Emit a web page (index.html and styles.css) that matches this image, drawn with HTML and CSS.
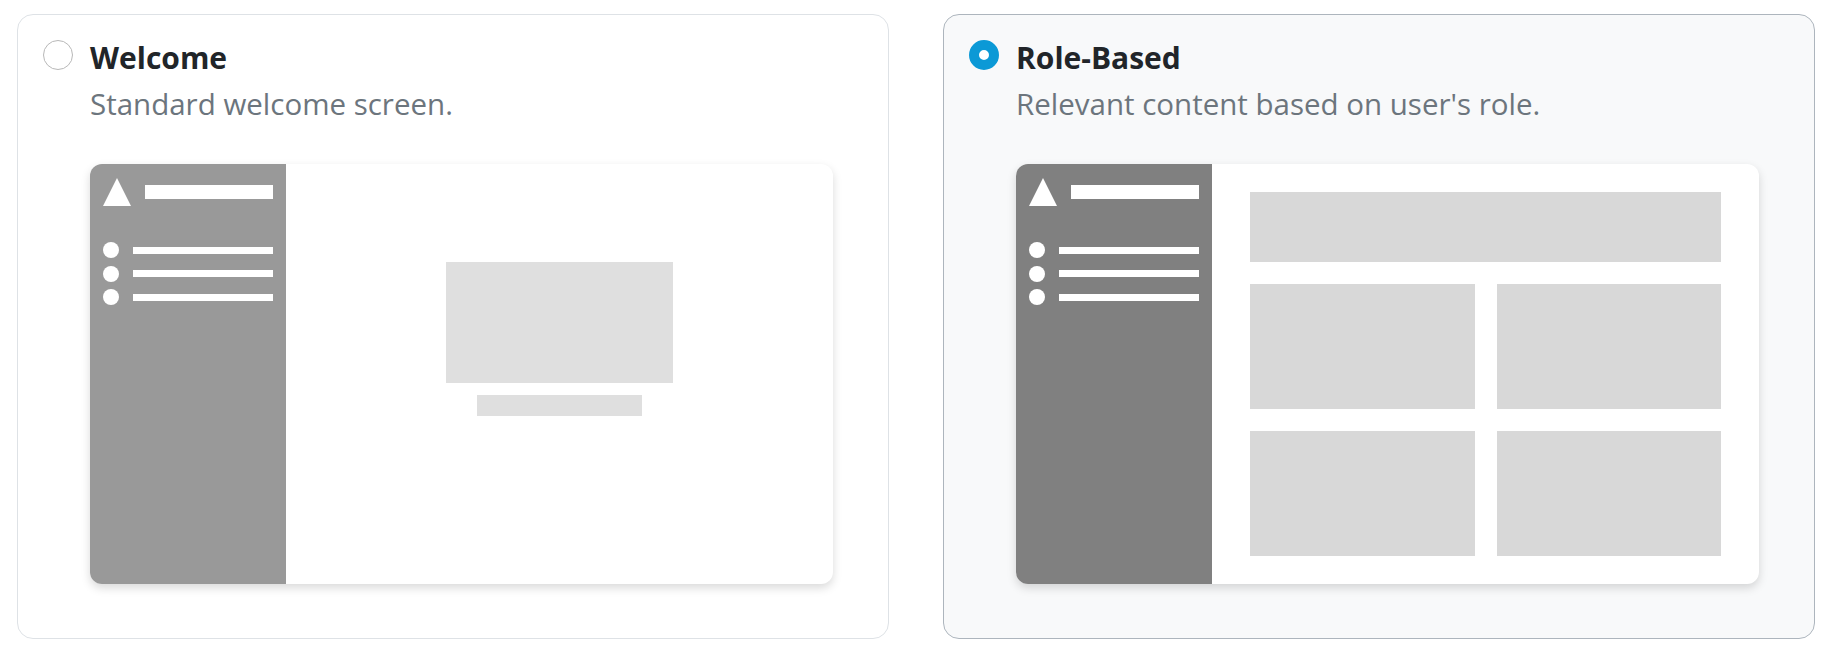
FILE: index.html
```html
<!DOCTYPE html>
<html lang="en">
<head>
  <title>Home page layout</title>
  <meta name="viewport" content="width=device-width, initial-scale=1">
  <meta charset="UTF-8">
  <link rel="stylesheet" href="styles.css">
</head>
<body>
  <div class="layout-options">
    <!-- Welcome option -->
    <div class="option">
      <div class="radio"></div>
      <div class="option-body">
        <div class="option-title">Welcome</div>
        <div class="option-desc">Standard welcome screen.</div>

        <div class="preview">
          <div class="preview-sidebar">
            <div class="sidebar-head">
              <div class="logo"></div>
              <div class="head-bar"></div>
            </div>
            <div class="nav">
              <div class="nav-item"><span class="dot"></span><span class="line"></span></div>
              <div class="nav-item"><span class="dot"></span><span class="line"></span></div>
              <div class="nav-item"><span class="dot"></span><span class="line"></span></div>
            </div>
          </div>
          <div class="preview-main welcome-main">
            <div class="hero"></div>
            <div class="hero-caption"></div>
          </div>
        </div>
      </div>
    </div>

    <!-- Role-based option (selected) -->
    <div class="option selected">
      <div class="radio"></div>
      <div class="option-body">
        <div class="option-title">Role-Based</div>
        <div class="option-desc">Relevant content based on user's role.</div>

        <div class="preview">
          <div class="preview-sidebar">
            <div class="sidebar-head">
              <div class="logo"></div>
              <div class="head-bar"></div>
            </div>
            <div class="nav">
              <div class="nav-item"><span class="dot"></span><span class="line"></span></div>
              <div class="nav-item"><span class="dot"></span><span class="line"></span></div>
              <div class="nav-item"><span class="dot"></span><span class="line"></span></div>
            </div>
          </div>
          <div class="preview-main role-main">
            <div class="tile wide"></div>
            <div class="tile"></div>
            <div class="tile"></div>
            <div class="tile"></div>
            <div class="tile"></div>
          </div>
        </div>
      </div>
    </div>
  </div>
</body>
</html>
```

FILE: styles.css
```css
body {
  font-family: 'Open Sans', 'Noto Sans', Arial, sans-serif;
  margin: 0;
  padding: 0;
  background: #fff;
}
.layout-options {
  display: flex;
  gap: 54px;
  padding: 14px 0 0 17px;
}
.option {
  width: 872px;
  box-sizing: border-box;
  display: flex;
  gap: 17px;
  padding: 23px 55px 54px 25px;
  border: 1.5px solid #dee2e6;
  border-radius: 16px;
  background: #fff;
  cursor: pointer;
}
.option.selected {
  border-color: #adb5bd;
  background: #f8f9fa;
}
.radio {
  flex: none;
  width: 30px;
  height: 30px;
  margin-top: 2px;
  box-sizing: border-box;
  border: 1.5px solid #b8b8b8;
  border-radius: 50%;
  background: #fff;
}
.selected .radio {
  border: 10px solid #0b99d6;
}
.option-body {
  flex: 1;
}
.option-title {
  font-size: 30px;
  font-weight: 700;
  line-height: 40px;
  color: #212529;
}
.option-desc {
  font-size: 29.5px;
  line-height: 40px;
  margin-top: 6px;
  color: #6c757d;
}

/* mini screen preview */
.preview {
  display: flex;
  height: 420px;
  margin-top: 40px;
  border-radius: 12px;
  overflow: hidden;
  background: #fff;
  box-shadow: 0 4px 10px rgba(0,0,0,0.15);
}
.preview-sidebar {
  width: 196px;
  box-sizing: border-box;
  padding: 14px 13px 0 13px;
  background: #999;
}
.selected .preview-sidebar {
  background: #808080;
}
.sidebar-head {
  display: flex;
  align-items: center;
  gap: 14px;
}
.logo {
  width: 28px;
  height: 28px;
  background: #fff;
  clip-path: polygon(50% 0, 100% 100%, 0 100%);
}
.head-bar {
  flex: 1;
  height: 14px;
  background: #fff;
}
.nav {
  display: flex;
  flex-direction: column;
  gap: 7.5px;
  margin-top: 36px;
}
.nav-item {
  display: flex;
  align-items: center;
  gap: 14px;
}
.dot {
  width: 16px;
  height: 16px;
  border-radius: 50%;
  background: #fff;
}
.line {
  flex: 1;
  height: 7px;
  background: #fff;
}
.preview-main {
  flex: 1;
}
.welcome-main {
  display: flex;
  flex-direction: column;
  align-items: center;
  padding-top: 98px;
}
.hero {
  width: 227px;
  height: 121px;
  background: #dfdfdf;
}
.hero-caption {
  width: 165px;
  height: 21px;
  margin-top: 12px;
  background: #dfdfdf;
}
.role-main {
  display: grid;
  grid-template-columns: 1fr 1fr;
  grid-template-rows: 70px 1fr 1fr;
  gap: 22px;
  padding: 28px 38px;
}
.tile {
  background: #d8d8d8;
}
.tile.wide {
  grid-column: span 2;
}
```
